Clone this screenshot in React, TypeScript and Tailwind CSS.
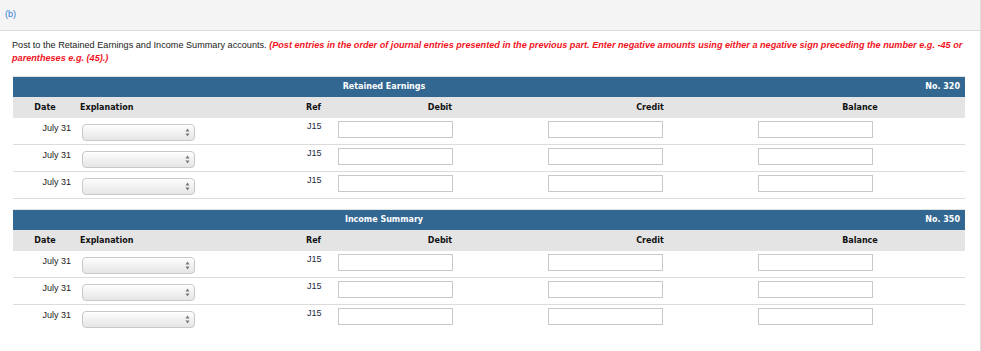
import React from 'react';

const cols = 'grid grid-cols-[64px_226px_32px_210px_210px_210px]';
const body = { fontFamily: '"Liberation Sans", Arial, sans-serif' };
const bold = { fontFamily: '"DejaVu Sans", Verdana, sans-serif' };

function SelectBox() {
  return (
    <div className="ml-[5px] mt-[6px] flex h-[17px] w-[113px] items-center justify-end rounded-[4px] border border-[#c9c9c9] bg-gradient-to-b from-[#fdfdfd] to-[#e6e6e6] pr-[4px] shadow-[inset_0_1px_0_#fff]">
      <svg width="5" height="9" viewBox="0 0 5 9" className="text-[#777]">
        <path d="M2.5 0.5 L4.5 3.5 L0.5 3.5 Z" fill="currentColor" />
        <path d="M2.5 8.5 L4.5 5.5 L0.5 5.5 Z" fill="currentColor" />
      </svg>
    </div>
  );
}

function AmountInput() {
  return <input type="text" className="ml-[3px] mt-[3px] h-[17px] w-[115px] border border-[#c8c8c8] bg-white outline-none" />;
}

function Ledger({ title, no, last }: { title: string; no: string; last?: boolean }) {
  return (
    <div className="ml-[13px] w-[952px] border-t border-[#e2e2e2]">
      <div className="flex h-[20px] items-center bg-[#326792] text-[8px] font-bold text-white" style={bold}>
        <div className="w-[742px] text-center">{title}</div>
        <div className="flex-1 pr-[5px] text-right">{no}</div>
      </div>
      <div className={`${cols} h-[21px] items-center bg-[#e4e4e4] text-[8px] font-bold text-[#111]`} style={bold}>
        <div className="text-center">Date</div>
        <div className="pl-[3px]">Explanation</div>
        <div className="pl-[3px]">Ref</div>
        <div className="text-center">Debit</div>
        <div className="text-center">Credit</div>
        <div className="text-center">Balance</div>
      </div>
      {[0, 1, 2].map((i) => (
        <div
          key={i}
          className={`${cols} h-[27px] items-start text-[9px] leading-[13px] text-[#222] ${last && i === 2 ? '' : 'border-b border-[#dcdcdc]'}`}
          style={body}
        >
          <div className="pr-[6px] pt-[4px] text-right">July 31</div>
          <div>
            <SelectBox />
          </div>
          <div className="pl-[4px] pt-[2px] text-[#1c2a44]">J15</div>
          <div>
            <AmountInput />
          </div>
          <div>
            <AmountInput />
          </div>
          <div>
            <AmountInput />
          </div>
        </div>
      ))}
    </div>
  );
}

export default function App() {
  return (
    <div className="min-h-[351px] w-[981px] border-r border-[#dedede] bg-white" style={body}>
      <div className="flex h-[31px] items-center border-b border-[#dcdcdc] bg-[#f4f4f4] pl-[5px] text-[9px] text-[#2b78d8]">
        (b)
      </div>
      <p className="ml-[12px] mt-[8px] whitespace-nowrap text-[9.15px] leading-[13px] text-[#222]">
        Post to the Retained Earnings and Income Summary accounts.{' '}
        <em className="font-bold text-[#f0141e]">
          (Post entries in the order of journal entries presented in the previous part. Enter negative amounts using either a negative sign preceding the number e.g. -45 or
          <br />
          parentheses e.g. (45).)
        </em>
      </p>
      <div className="mt-[11px]">
        <Ledger title="Retained Earnings" no="No. 320" />
      </div>
      <div className="mt-[10px]">
        <Ledger title="Income Summary" no="No. 350" last />
      </div>
    </div>
  );
}
